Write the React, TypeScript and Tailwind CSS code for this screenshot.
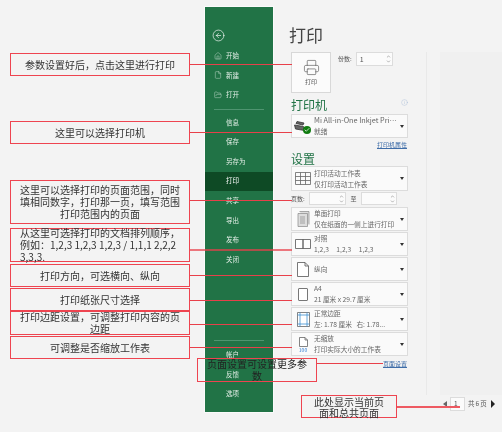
import { Printer, Home, File, FolderOpen, CircleArrowLeft, Info, ChevronUp, ChevronDown, Check } from 'lucide-react';
import type { ReactNode } from 'react';

const cjk = "font-['Noto_Sans_CJK_SC','Noto_Sans',sans-serif]";

const topNav = [
  { label: '开始', icon: Home },
  { label: '新建', icon: File },
  { label: '打开', icon: FolderOpen },
];
const midNav = ['信息', '保存', '另存为', '打印', '共享', '导出', '发布', '关闭'];
const bottomNav = ['帐户', '反馈', '选项'];

// callout boxes of the annotation layer
const notes = [
  { text: '参数设置好后，点击这里进行打印', box: 'top-[53px] h-[23px]' },
  { text: '这里可以选择打印机', box: 'top-[121px] h-[23px]' },
  { text: '这里可以选择打印的页面范围，同时填相同数字，打印那一页，填写范围打印范围内的页面', box: 'top-[180px] h-[44px]' },
  { text: '从这里可选择打印的文档排列顺序，例如：1,2,3 1,2,3 1,2,3 / 1,1,1 2,2,2 3,3,3.', box: 'top-[228px] h-[34px] !text-left' },
  { text: '打印方向，可选横向、纵向', box: 'top-[264px] h-[23px]' },
  { text: '打印纸张尺寸选择', box: 'top-[288px] h-[23px]' },
  { text: '打印边距设置，可调整打印内容的页边距', box: 'top-[311px] h-[24px]' },
  { text: '可调整是否缩放工作表', box: 'top-[336px] h-[23px]' },
];

const leaders = [
  'top-[64px] h-px',
  'top-[132px] h-px',
  'top-[200px] h-px',
  'top-[249px] h-[2px] opacity-70',
  'top-[275px] h-px',
  'top-[300px] h-px',
  'top-[324px] h-px',
  'top-[347px] h-px',
];

function Caret() {
  return <div className="h-0 w-0 shrink-0 border-x-[2.5px] border-t-[3px] border-x-transparent border-t-[#333]" />;
}

function Spinner({ className, children }: { className: string; children?: ReactNode }) {
  return (
    <div className={`flex items-center justify-between border border-[#dcdcdc] bg-[#fbfbfb] pl-[3px] pr-[1px] ${className}`}>
      {children}
      <div className="ml-auto flex flex-col text-[#555]">
        <ChevronUp size={5} strokeWidth={2} />
        <ChevronDown size={5} strokeWidth={2} />
      </div>
    </div>
  );
}

function Option({ icon, title, sub, h = 'h-[24px]' }: { icon: ReactNode; title: string; sub: string; h?: string }) {
  return (
    <div className={`flex w-[117px] shrink-0 items-center border border-[#dcdcdc] bg-[#fafafa] pr-[3px] ${h}`}>
      <div className="flex w-[22px] shrink-0 items-center justify-center">{icon}</div>
      <div className="min-w-0 flex-1 text-[6.7px] leading-[11px] text-[#666]">
        <div className="truncate">{title}</div>
        {sub && <div className="truncate">{sub}</div>}
      </div>
      <Caret />
    </div>
  );
}

export default function App() {
  return (
    <div className={`relative flex h-[432px] w-[502px] overflow-hidden bg-[#f3f3f3] pl-[205px] pt-[7px] blur-[0.3px] ${cjk}`}>
      {/* Backstage sidebar */}
      <div className="flex h-[405px] w-[68px] shrink-0 flex-col bg-[#217346] pt-[22px] pb-[8px] text-[6.5px] text-[#e4efe8] outline outline-1 outline-[#fafafa]">
        <CircleArrowLeft size={13} strokeWidth={1.2} className="ml-[7px] text-white" />
        <div className="mt-[4px]">
          {topNav.map((n) => (
            <div key={n.label} className="flex h-[19.6px] items-center pl-[9px]">
              <n.icon size={8} strokeWidth={1.2} className="mr-[4px]" />
              {n.label}
            </div>
          ))}
        </div>
        <div className="mx-[9px] mt-[4px] mb-[3px] h-px bg-[#4f9470]" />
        {midNav.map((label) => (
          <div
            key={label}
            className={`flex h-[19.6px] items-center pl-[21px] ${label === '打印' ? 'bg-[#0e4a25] text-white' : ''}`}
          >
            {label}
          </div>
        ))}
        <div className="mx-[9px] mt-auto mb-[4px] h-px bg-[#4f9470]" />
        {bottomNav.map((label) => (
          <div key={label} className="flex h-[19.6px] items-center pl-[21px]">
            {label}
          </div>
        ))}
      </div>

      {/* Print settings column */}
      <div className="flex w-[135px] shrink-0 flex-col pl-[18px] text-[#555]">
        <div className="-ml-[2px] mt-[16px] h-[24px] text-[17px] leading-[24px] text-[#444]">打印</div>
        <div className="mt-[5px] flex">
          <div className="flex h-[41px] w-[40px] flex-col items-center justify-center border border-[#d8d8d8] bg-[#fbfbfb] text-[6px] text-[#555]">
            <Printer size={17} strokeWidth={0.9} />
            <span className="mt-[1px]">打印</span>
          </div>
          <div className="ml-[7px] mr-[4px] pt-[2px] text-[6px] leading-[10px]">份数:</div>
          <Spinner className="h-[14px] w-[37px] text-[7px]">1</Spinner>
        </div>
        <div className="relative mt-[3px] h-[18px] text-[12px] leading-[18px] text-[#217346]">
          打印机
          <Info size={7} strokeWidth={1} className="absolute right-0 top-[3px] text-[#8aa9cf]" />
        </div>
        <div className="flex h-[24px] w-[117px] items-center border border-[#dcdcdc] bg-[#fafafa] pr-[3px]">
          <div className="relative ml-[2px] flex h-[16px] w-[20px] shrink-0 items-center">
            <svg width="14" height="11" viewBox="0 0 14 11" fill="#666" stroke="#333" strokeWidth="0.8">
              <path d="M3 .5l7 1.500-1 2-7-1.500zM.5 4l9 1.500 1 4-9-1.500z" />
            </svg>
            <div className="absolute bottom-[0px] right-[3px] flex h-[8px] w-[8px] items-center justify-center rounded-full bg-[#107c10]">
              <Check size={6} strokeWidth={3} className="text-white" />
            </div>
          </div>
          <div className="min-w-0 flex-1 pr-[2px] text-[7.3px] leading-[11px] text-[#666]">
            <div className="truncate">Mi All-in-One Inkjet Printer</div>
            <div className="text-[6.7px]">就绪</div>
          </div>
          <Caret />
        </div>
        <div className="mt-[2px] h-[10px] w-[117px] pr-[1px] text-right text-[6px] leading-[10px] text-[#3f6da8] underline">打印机属性</div>
        <div className="mt-[1px] h-[15px] text-[12px] leading-[15px] text-[#217346]">设置</div>
        <Option
          h="h-[25px]"
          title="打印活动工作表"
          sub="仅打印活动工作表"
          icon={
            <svg width="16" height="13" viewBox="0 0 16 13" fill="none" stroke="#666" strokeWidth="0.8">
              <path d="M.5.5h15v12H.5zM.5 4.500h15M.5 8.500h15M5.500.5v12M10.500.5v12" />
            </svg>
          }
        />
        <div className="mt-[1px] flex h-[13px] items-center text-[6px]">
          <span className="w-[18px]">页数:</span>
          <Spinner className="h-[13px] w-[37px]" />
          <span className="w-[15px] text-center">至</span>
          <Spinner className="h-[13px] w-[36px]" />
        </div>
        <div className="mt-[2px] flex flex-col gap-[1px]">
          <Option
            title="单面打印"
            sub="仅在纸面的一侧上进行打印"
            icon={
              <svg width="13" height="16" viewBox="0 0 13 16" fill="#ddd" stroke="#888" strokeWidth="0.7">
                <path d="M1 2.500h9.500v13H1zM2.500.5H12v13" />
                <path d="M3 6h5M3 8h5M3 10h5M3 12h5" />
              </svg>
            }
          />
          <Option
            title="对照"
            sub={'1,2,3\u00a0\u00a0\u00a0\u00a0\u00a01,2,3\u00a0\u00a0\u00a0\u00a0\u00a01,2,3'}
            icon={
              <svg width="16" height="10" viewBox="0 0 16 10" fill="#fff" stroke="#555" strokeWidth="0.8">
                <path d="M.5.5h7.500v9H.5zM8 .5h7.500v9H8z" />
              </svg>
            }
          />
          <Option
            title="纵向"
            sub=""
            icon={
              <svg width="12" height="15" viewBox="0 0 12 15" fill="#fff" stroke="#555" strokeWidth="0.8">
                <path d="M.5.5h7.500l3.500 3.500v10.500H.5zM8 .5V4h3.500" />
              </svg>
            }
          />
          <Option
            title="A4"
            sub="21 厘米 x 29.7 厘米"
            icon={<div className="h-[13px] w-[10px] rounded-[1px] border border-[#777] bg-white" />}
          />
          <Option
            title="正常边距"
            sub={'左:\u00a01.78 厘米\u00a0\u00a0\u00a0右:\u00a01.78...'}
            icon={
              <svg width="13" height="15" viewBox="0 0 13 15" fill="#fff" stroke="#3c8fd0" strokeWidth="0.8">
                <path stroke="#666" d="M.5.5h12v14H.5z" />
                <path d="M3 .5v14M10 .5v14M.5 3h12M.5 12h12" />
              </svg>
            }
          />
          <Option
            title="无缩放"
            sub="打印实际大小的工作表"
            icon={
              <div className="flex flex-col items-center">
                <svg width="9" height="10" viewBox="0 0 9 10" fill="#fff" stroke="#666" strokeWidth="0.8">
                  <path d="M.5.5h5.500l2.500 2.500v6.500H.5zM6 .5V3h2.500" />
                </svg>
                <span className="text-[5px] leading-[5px] text-[#2b7cd3]">100</span>
              </div>
            }
          />
        </div>
        <div className="mt-[3px] h-[10px] w-[117px] pr-[1px] text-right text-[6px] leading-[10px] text-[#3f6da8] underline">页面设置</div>
      </div>

      {/* Preview pane */}
      <div className="ml-[18px] mt-[45px] flex flex-1 flex-col">
        <div className="h-[343px] border-l border-[#e9e9e9] pl-[13px]">
          <div className="h-full bg-[#f0f0f0]" />
        </div>
        <div className="mt-[2px] flex h-[14px] items-center pl-[17px] text-[6.500px] tracking-[-0.2px] text-[#555]">
          <div className="h-0 w-0 border-y-[3.5px] border-r-[4px] border-y-transparent border-r-[#666]" />
          <div className="ml-[3px] flex h-[14px] w-[15px] items-center border border-[#dcdcdc] bg-[#fbfbfb] pl-[3px]">1</div>
          <span className="ml-[3px] w-[20px] whitespace-nowrap">共 6 页</span>
          <div className="ml-[3px] h-0 w-0 border-y-[4px] border-l-[4px] border-y-transparent border-l-[#222]" />
        </div>
      </div>

      {/* Annotation layer */}
      {leaders.map((c) => (
        <div key={c} className={`absolute left-[190px] w-[102px] bg-[#e8404a] ${c}`} />
      ))}
      {notes.map((n) => (
        <div
          key={n.text}
          className={`absolute left-[10px] flex w-[180px] items-center border border-[#ee4450] px-[9px] text-center text-[10px] leading-[12px] text-[#333] ${n.box}`}
        >
          <div className="w-full">{n.text}</div>
        </div>
      ))}
      <div className="absolute left-[197px] top-[358px] flex h-[24px] w-[120px] items-center border border-[#ee4450] px-[9px] text-center text-[10px] leading-[12px] text-[#222]">
        <div className="w-full">页面设置可设置更多参数</div>
      </div>
      <div className="absolute left-[317px] top-[363px] h-px w-[66px] bg-[#e8404a]" />
      <div className="absolute left-[301px] top-[395px] flex h-[23px] w-[96px] items-center border border-[#ee4450] px-[10px] text-center text-[10px] leading-[11px] text-[#333]">
        <div className="w-full">此处显示当前页面和总共页面</div>
      </div>
      <div className="absolute left-[397px] top-[406px] h-[1.5px] w-[63px] bg-[#ee5a62]" />
    </div>
  );
}
